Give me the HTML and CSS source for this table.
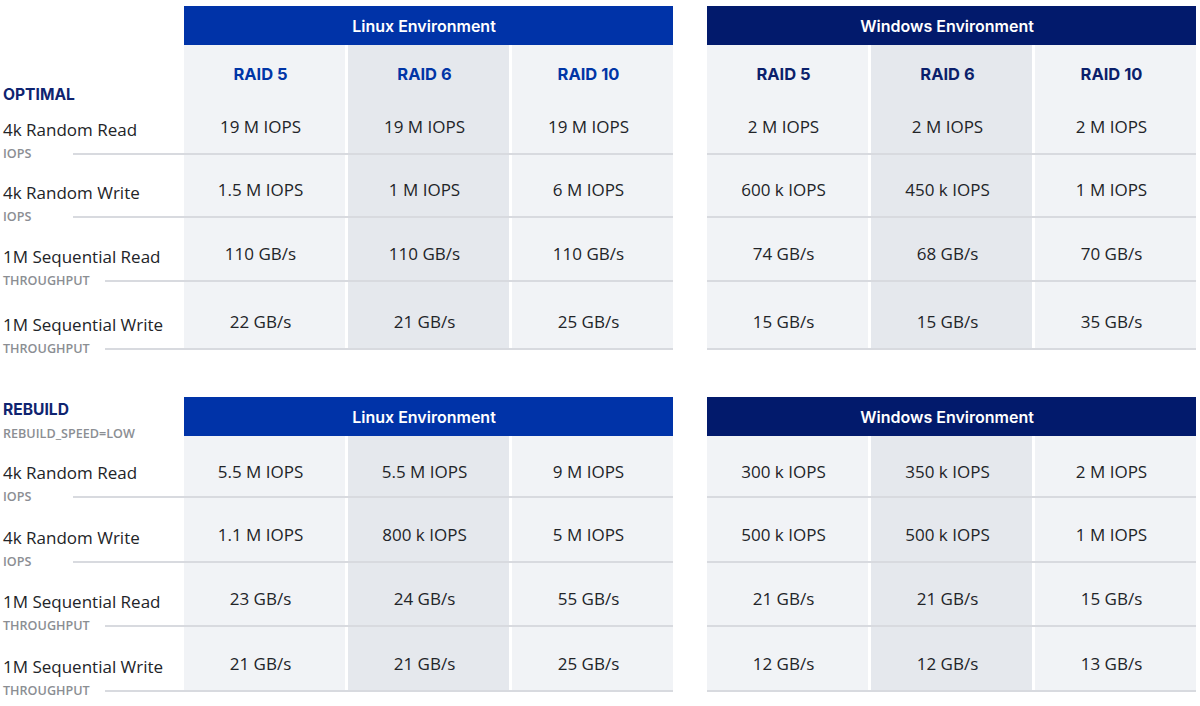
FILE: index.html
```html
<!DOCTYPE html>
<html lang="en">
<head>
<meta charset="utf-8">
<title>RAID Performance</title>
<link rel="stylesheet" href="styles.css">
</head>
<body>
<div class="page">
  <section class="block">
    <div class="row head-row">
      <div class="lab"></div>
      <div class="env linux">Linux Environment</div>
      <div class="env windows">Windows Environment</div>
    </div>
    <div class="row raid-row">
      <div class="lab lab-end"><span class="sect sect-opt">OPTIMAL</span></div>
      <div class="grp linux"><div class="c">RAID 5</div><div class="c dk">RAID 6</div><div class="c">RAID 10</div></div>
      <div class="grp windows"><div class="c">RAID 5</div><div class="c dk">RAID 6</div><div class="c">RAID 10</div></div>
    </div>
    <div class="row data h55">
      <div class="lab lab-end"><span class="name">4k Random Read</span><div class="sub"><span class="st w-iops">IOPS</span><span class="rule"></span></div></div>
      <div class="grp linux"><div class="c">19 M IOPS</div><div class="c dk">19 M IOPS</div><div class="c">19 M IOPS</div></div>
      <div class="grp windows"><div class="c">2 M IOPS</div><div class="c dk">2 M IOPS</div><div class="c">2 M IOPS</div></div>
    </div>
    <div class="row data h63">
      <div class="lab lab-end"><span class="name">4k Random Write</span><div class="sub"><span class="st w-iops">IOPS</span><span class="rule"></span></div></div>
      <div class="grp linux"><div class="c">1.5 M IOPS</div><div class="c dk">1 M IOPS</div><div class="c">6 M IOPS</div></div>
      <div class="grp windows"><div class="c">600 k IOPS</div><div class="c dk">450 k IOPS</div><div class="c">1 M IOPS</div></div>
    </div>
    <div class="row data h64">
      <div class="lab lab-end"><span class="name">1M Sequential Read</span><div class="sub"><span class="st w-tp">THROUGHPUT</span><span class="rule"></span></div></div>
      <div class="grp linux"><div class="c">110 GB/s</div><div class="c dk">110 GB/s</div><div class="c">110 GB/s</div></div>
      <div class="grp windows"><div class="c">74 GB/s</div><div class="c dk">68 GB/s</div><div class="c">70 GB/s</div></div>
    </div>
    <div class="row data h68">
      <div class="lab lab-end"><span class="name">1M Sequential Write</span><div class="sub"><span class="st w-tp">THROUGHPUT</span><span class="rule"></span></div></div>
      <div class="grp linux"><div class="c">22 GB/s</div><div class="c dk">21 GB/s</div><div class="c">25 GB/s</div></div>
      <div class="grp windows"><div class="c">15 GB/s</div><div class="c dk">15 GB/s</div><div class="c">35 GB/s</div></div>
    </div>
  </section>

  <section class="block block-2">
    <div class="row head-row">
      <div class="lab lab-top"><span class="sect">REBUILD</span><span class="st st-top">REBUILD_SPEED=LOW</span></div>
      <div class="env linux">Linux Environment</div>
      <div class="env windows">Windows Environment</div>
    </div>
    <div class="row data h62 first">
      <div class="lab lab-end"><span class="name">4k Random Read</span><div class="sub"><span class="st w-iops">IOPS</span><span class="rule"></span></div></div>
      <div class="grp linux"><div class="c">5.5 M IOPS</div><div class="c dk">5.5 M IOPS</div><div class="c">9 M IOPS</div></div>
      <div class="grp windows"><div class="c">300 k IOPS</div><div class="c dk">350 k IOPS</div><div class="c">2 M IOPS</div></div>
    </div>
    <div class="row data h65">
      <div class="lab lab-end"><span class="name">4k Random Write</span><div class="sub"><span class="st w-iops">IOPS</span><span class="rule"></span></div></div>
      <div class="grp linux"><div class="c">1.1 M IOPS</div><div class="c dk">800 k IOPS</div><div class="c">5 M IOPS</div></div>
      <div class="grp windows"><div class="c">500 k IOPS</div><div class="c dk">500 k IOPS</div><div class="c">1 M IOPS</div></div>
    </div>
    <div class="row data h64">
      <div class="lab lab-end"><span class="name">1M Sequential Read</span><div class="sub"><span class="st w-tp">THROUGHPUT</span><span class="rule"></span></div></div>
      <div class="grp linux"><div class="c">23 GB/s</div><div class="c dk">24 GB/s</div><div class="c">55 GB/s</div></div>
      <div class="grp windows"><div class="c">21 GB/s</div><div class="c dk">21 GB/s</div><div class="c">15 GB/s</div></div>
    </div>
    <div class="row data h65">
      <div class="lab lab-end"><span class="name">1M Sequential Write</span><div class="sub"><span class="st w-tp">THROUGHPUT</span><span class="rule"></span></div></div>
      <div class="grp linux"><div class="c">21 GB/s</div><div class="c dk">21 GB/s</div><div class="c">25 GB/s</div></div>
      <div class="grp windows"><div class="c">12 GB/s</div><div class="c dk">12 GB/s</div><div class="c">13 GB/s</div></div>
    </div>
  </section>
</div>
</body>
</html>
```

FILE: styles.css
```css
* { box-sizing: border-box; }
html, body { margin: 0; padding: 0; background: #ffffff; }
body {
  font-family: "Open Sans", "Liberation Sans", sans-serif;
  color: #222428;
  width: 1200px;
  height: 706px;
  overflow: hidden;
}
.page { padding-top: 6px; }
.block-2 { margin-top: 47px; }

.row { display: flex; }
.lab {
  width: 184px;
  flex: none;
  padding-left: 3px;
  display: flex;
  flex-direction: column;
}
.lab-end { justify-content: flex-end; }
.lab-top { justify-content: flex-start; padding-top: 3px; }

.head-row { height: 39px; }
.env {
  width: 489px;
  flex: none;
  display: flex;
  align-items: center;
  justify-content: center;
  padding-right: 9px;
  color: #ffffff;
  font-family: "Inter", "Liberation Sans", sans-serif;
  font-weight: 600;
  font-size: 16px;
}
.env.linux { background: #0033a8; margin-right: 34px; }
.env.windows { background: #021a6c; }

.grp {
  width: 489px;
  flex: none;
  display: grid;
  grid-template-columns: repeat(3, 1fr);
  column-gap: 3px;
}
.grp.linux { margin-right: 34px; }
.c {
  background: #f1f3f6;
  display: flex;
  justify-content: center;
  padding-right: 8px;
}
.c.dk { background: #e5e8ed; }

.raid-row { height: 55px; }
.raid-row .c {
  align-items: flex-start;
  padding-top: 19px;
  line-height: 20px;
  font-family: "Inter", "Liberation Sans", sans-serif;
  font-weight: 700;
  font-size: 16.5px;
}
.raid-row .linux .c { color: #0035a6; }
.raid-row .windows .c { color: #0b1f6b; }

.sect {
  font-family: "Inter", "Liberation Sans", sans-serif;
  font-weight: 700;
  font-size: 15.6px;
  line-height: 20px;
  color: #0f2470;
}
.sect-opt { margin-bottom: -5px; }

.data .grp { border-bottom: 2px solid #d8dadf; }
.data .c {
  align-items: flex-end;
  padding-bottom: 14px;
  font-size: 17px;
  line-height: 24px;
}
.data.first .c { padding-bottom: 12px; }
.name {
  font-size: 17px;
  line-height: 22px;
  margin-bottom: 5px;
  white-space: nowrap;
}
.sub {
  display: flex;
  align-items: center;
  height: 16px;
  margin-bottom: -7px;
}
.st {
  font-size: 12.6px;
  line-height: 16px;
  font-weight: 600;
  color: #8b8e93;
  flex: none;
  white-space: nowrap;
}
.st-top { margin-top: 6px; }
.w-iops { width: 70px; }
.w-tp { width: 102px; }
.rule {
  flex: 1;
  height: 2px;
  background: #d8dadf;
}

.h55 { height: 55px; }
.h62 { height: 62px; }
.h63 { height: 63px; }
.h64 { height: 64px; }
.h65 { height: 65px; }
.h68 { height: 68px; }
```
